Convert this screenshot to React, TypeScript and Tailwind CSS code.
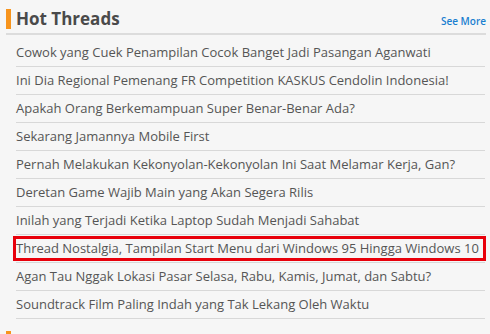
import React from "react";

const threads = [
  "Cowok yang Cuek Penampilan Cocok Banget Jadi Pasangan Aganwati",
  "Ini Dia Regional Pemenang FR Competition KASKUS Cendolin Indonesia!",
  "Apakah Orang Berkemampuan Super Benar-Benar Ada?",
  "Sekarang Jamannya Mobile First",
  "Pernah Melakukan Kekonyolan-Kekonyolan Ini Saat Melamar Kerja, Gan?",
  "Deretan Game Wajib Main yang Akan Segera Rilis",
  "Inilah yang Terjadi Ketika Laptop Sudah Menjadi Sahabat",
  "Thread Nostalgia, Tampilan Start Menu dari Windows 95 Hingga Windows 10",
  "Agan Tau Nggak Lokasi Pasar Selasa, Rabu, Kamis, Jumat, dan Sabtu?",
  "Soundtrack Film Paling Indah yang Tak Lekang Oleh Waktu",
];

export default function App() {
  return (
    <div
      className="w-[490px] h-[334px] overflow-hidden bg-[#f6f6f6] pl-[6px] pr-[4px] pt-[9px]"
      style={{ fontFamily: '"Open Sans", sans-serif' }}
    >
      <div className="flex items-end justify-between border-b-2 border-[#dcdcdc] pb-[4px]">
        <div className="flex items-center">
          <div className="w-[5px] h-[20px] bg-[#f7941d]" />
          <h2 className="ml-[5px] text-[17px] leading-[20px] font-bold text-[#4a4a4a]">
            Hot Threads
          </h2>
        </div>
        <a className="text-[10px] leading-[14px] font-semibold text-[#1a7fd0] mb-[1px]">
          See More
        </a>
      </div>
      <ul className="mt-[4px] pl-[10px] pr-[1px]">
        {threads.map((t, i) => {
          const hl = i === 7;
          return (
            <li
              key={i}
              className={
                "relative h-[28px] flex items-center border-b-[1.5px] border-[#d8d8d8] text-[13px] text-[#555555] whitespace-nowrap"
              }
            >
              {hl && (
                <div className="absolute left-[-3px] right-[-1px] top-[1px] bottom-[1px] border-[3px] border-[#e8000b]" />
              )}
              <span>{t}</span>
            </li>
          );
        })}
      </ul>
      <div className="mt-[12px] w-[5px] h-[10px] bg-[#f7941d]" />
    </div>
  );
}
